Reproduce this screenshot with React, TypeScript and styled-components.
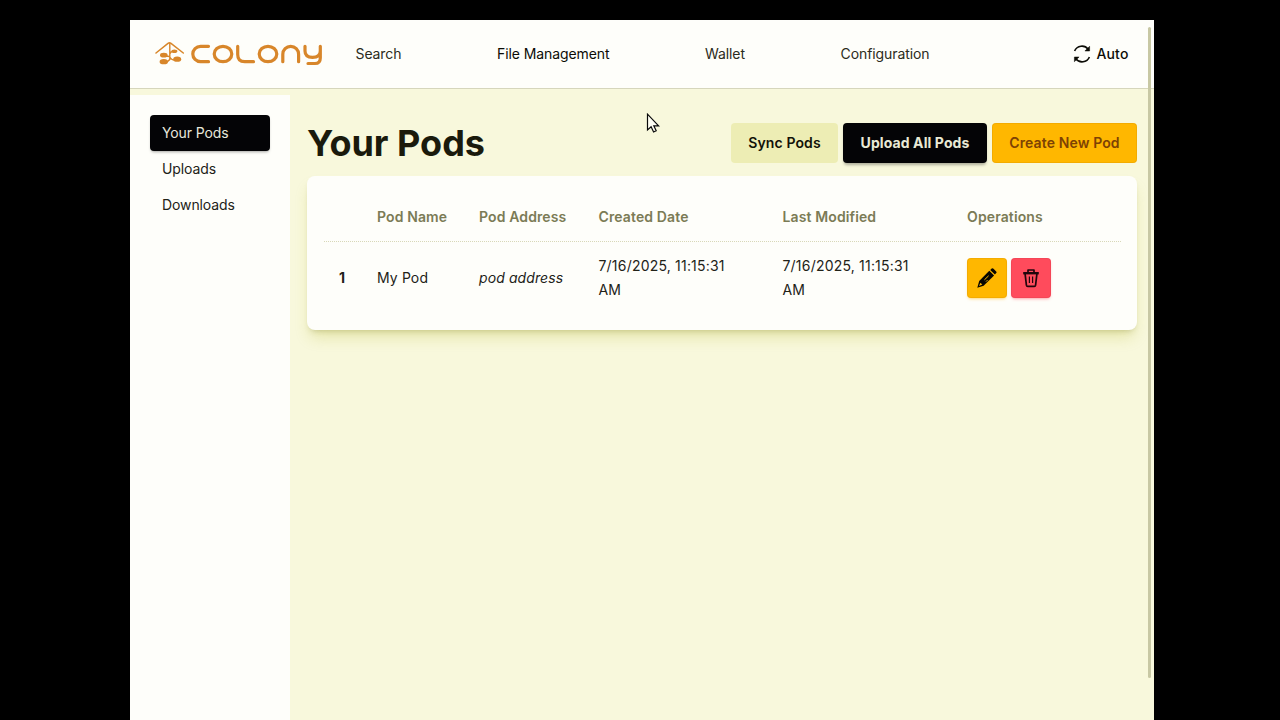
import React from "react";
import styled, { createGlobalStyle, css } from "styled-components";

const Global = createGlobalStyle`
  * { box-sizing: border-box; }
  body { margin: 0; background: #000; font-family: Inter, "Liberation Sans", sans-serif; font-size: 14px; line-height: 20px; color: #222218; }
  h1 { margin: 0; }
`;

const Desktop = styled.div`
  height: 720px;
  padding: 20px 126px 0 130px;
  overflow: hidden;
  position: relative;
  background: #000;
`;
const Window = styled.div`
  height: 700px;
  display: flex;
  flex-direction: column;
  background: #f8f8dc;
  position: relative;
`;
const Header = styled.header`
  height: 69px;
  flex: none;
  display: flex;
  align-items: center;
  padding: 0 25.5px 0 24.5px;
  background: #fefefa;
  border-bottom: 1px solid #d6d6bc;
`;
const Nav = styled.nav`
  display: flex;
  gap: 95.7px;
  margin-left: 33px;
  flex: 1;
  letter-spacing: -0.1px;
`;
const NavItem = styled.span<{ $active?: boolean }>`
  color: ${(p) => (p.$active ? "#0c0c06" : "#2b2b20")};
`;
const Theme = styled.div`
  display: flex;
  align-items: center;
  gap: 5px;
  font-weight: 500;
  letter-spacing: 0.15px;
  color: #0c0c06;
`;
const Body = styled.div`
  display: flex;
  flex: 1;
`;
const Sidebar = styled.aside`
  width: 160px;
  margin-top: 6px;
  padding: 20px;
  background: #fefefa;
  letter-spacing: -0.1px;
`;
const MenuItem = styled.div<{ $active?: boolean }>`
  height: 36px;
  padding: 8px 12px;
  border-radius: 4px;
  ${(p) =>
    p.$active &&
    css`
      background: #040406;
      color: #e8e8dc;
      box-shadow: 0 2px 3px -1px rgba(0, 0, 0, 0.35);
    `}
`;
const Main = styled.main`
  flex: 1;
  padding: 34px 17px 0 17px;
`;
const TitleRow = styled.div`
  display: flex;
  align-items: center;
  gap: 5px;
  height: 40px;
`;
const Title = styled.h1`
  flex: 1;
  font-size: 36px;
  line-height: 40px;
  font-weight: 700;
  color: #1a1a0c;
`;
const tones = {
  plain: css`background: #ededb4; color: #121208; letter-spacing: 0.12px;`,
  dark: css`background: #040406; color: #e9e9d5; font-weight: 700; letter-spacing: 0.1px; box-shadow: 0 3px 3px -1px rgba(0, 0, 0, 0.3);`,
  amber: css`background: #ffb700; color: #7d4204; letter-spacing: 0.12px; box-shadow: inset 0 0 0 1px rgba(200, 130, 0, 0.22);`,
};
const Button = styled.button<{ $tone: keyof typeof tones; $width: number }>`
  width: ${(p) => p.$width}px;
  height: 40px;
  padding: 0;
  border: 0;
  border-radius: 4px;
  font: 600 14px/20px Inter, "Liberation Sans", sans-serif;
  white-space: nowrap;
  ${(p) => tones[p.$tone]}
`;
const Card = styled.section`
  margin-top: 13px;
  height: 154px;
  padding: 16px 16px 16px 17px;
  border-radius: 8px;
  background: #fefefa;
  box-shadow: 0 10px 15px -3px rgba(170, 170, 0, 0.24), 0 4px 6px -4px rgba(90, 90, 30, 0.35);
`;
const Row = styled.div<{ $head?: boolean }>`
  display: grid;
  grid-template-columns: 38px 102px 119.5px 184px 184.5px 1fr;
  align-items: center;
  padding-left: 15px;
  height: ${(p) => (p.$head ? 50 : 72)}px;
  line-height: 24px;
  ${(p) =>
    p.$head &&
    css`
      border-bottom: 1px dotted #d8d8b8;
      font-weight: 600;
      letter-spacing: 0.12px;
      color: #7b7b55;
    `}
`;
const Index = styled.b`
  font-weight: 700;
`;
const Name = styled.span`
  letter-spacing: 0.12px;
`;
const Address = styled.em`
  letter-spacing: 0.1px;
`;
const Stamp = styled.span`
  width: 152px;
  padding-right: 20px;
  letter-spacing: 0.2px;
`;
const Actions = styled.div`
  display: flex;
  gap: 4px;
`;
const IconButton = styled.button<{ $danger?: boolean }>`
  width: 40px;
  height: 40px;
  padding: 0;
  border: 0;
  border-radius: 4px;
  display: grid;
  place-items: center;
  background: ${(p) => (p.$danger ? "#ff4b5c" : "#ffb700")};
  box-shadow: inset 0 0 0 1px ${(p) => (p.$danger ? "rgba(200,50,70,.2)" : "rgba(200,130,0,.2)")},
    0 2px 3px -1px ${(p) => (p.$danger ? "rgba(255,75,92,.5)" : "rgba(255,183,0,.5)")};
`;
const Scrollbar = styled.div`
  position: absolute;
  right: 3px;
  top: 7px;
  width: 3px;
  height: 651px;
  border-radius: 2px;
  background: #c8c8a4;
`;
const Cursor = styled.svg`
  position: absolute;
  left: 646px;
  top: 113px;
`;

const Logo = () => (
  <svg width="168" height="30" viewBox="0 -1 168 30" fill="none" stroke="#d8862a" role="img" aria-label="Colony">
    <path d="M1 13L13 3.3Q14.5 2.2 16 3.3L28.3 13" strokeWidth="1.5" strokeLinecap="round" />
    <path d="M14.8 3V20M14.8 19.5Q13 22 10 22M14.8 16.5Q12 16 10 16M14.8 14Q16 11 18 11.5M14.8 17Q16 20 20 20" strokeWidth="1.4" />
    <g fill="#d8862a" stroke="none">
      <ellipse cx="8.8" cy="15.2" rx="3.8" ry="2.4" />
      <ellipse cx="8.8" cy="21.7" rx="4.2" ry="2.6" />
      <ellipse cx="19.4" cy="11.2" rx="3" ry="1.8" />
      <ellipse cx="22.2" cy="19.2" rx="4" ry="2.6" />
    </g>
    <g strokeWidth="3.2" strokeLinecap="round" strokeLinejoin="round">
      <path d="M53.5 6.3H45.5A7.7 7.7 0 0 0 45.5 21.7H53.5" />
      <ellipse cx="68" cy="14" rx="8.8" ry="7.7" />
      <path d="M82.7 6.3V14.5Q82.7 21.7 89.7 21.7H98.5" />
      <ellipse cx="113" cy="14" rx="8.8" ry="7.7" />
      <path d="M127.8 21.7V14.2A7.9 7.9 0 0 1 143.6 14.2V21.7" />
      <path d="M150 6.3V11Q150 17.3 157.5 17.3Q165.3 17.3 165.3 11V6.3V18Q165.3 23.5 160 23.5H153" />
    </g>
  </svg>
);

const RefreshIcon = () => (
  <svg width="18" height="20" viewBox="0 0 18 20" fill="none" stroke="#0c0c06" strokeWidth="1.6">
    <path d="M1.6 7A7.9 7.9 0 0 1 15.2 5.3M16.4 13A7.9 7.9 0 0 1 2.8 14.7" />
    <path d="M16.6 2.3V7H11.9ZM1.4 17.7V13H6.1Z" fill="#0c0c06" strokeWidth=".5" />
  </svg>
);

const PencilIcon = () => (
  <svg width="20" height="20" viewBox="0 0 20 20">
    <path d="M13.2 1.9L14.7 .6Q15.6 -.1 16.5 .7L19.2 3.4Q20 4.2 19.2 5.1L17.9 6.6Z" fill="#080600" />
    <path d="M12.3 2.8L17.1 7.6L6.6 17.8L.3 19.8L2.2 13Z" fill="#080600" />
    <path d="M3.4 14.8L5.3 16.6L2 17.9Z" fill="#ffb700" />
    <path d="M7.4 11.9L11.6 7.8M9 13.6L10.5 12.1" stroke="#ffb700" strokeWidth="1" />
  </svg>
);

const TrashIcon = () => (
  <svg width="18" height="20" viewBox="0 0 18 20" fill="none" stroke="#22060c" strokeWidth="1.7" strokeLinejoin="round">
    <path d="M1.2 5.2H16.8" strokeWidth="2.4" />
    <path d="M6 4.2V2H12V4.2M3.1 5.8L4.4 17.2Q4.6 18.4 5.7 18.4H12.3Q13.4 18.4 13.6 17.2L14.9 5.8" />
    <path d="M7.4 8.6V15M10.6 8.6V15" strokeWidth="1.2" />
  </svg>
);

const navItems = ["Search", "File Management", "Wallet", "Configuration"];
const menuItems = ["Your Pods", "Uploads", "Downloads"];
const columns = ["", "Pod Name", "Pod Address", "Created Date", "Last Modified", "Operations"];

export default function App() {
  return (
    <Desktop>
      <Global />
      <Window>
        <Header>
          <Logo />
          <Nav>
            {navItems.map((n) => (
              <NavItem key={n} $active={n === "File Management"}>{n}</NavItem>
            ))}
          </Nav>
          <Theme><RefreshIcon />Auto</Theme>
        </Header>
        <Body>
          <Sidebar>
            {menuItems.map((m, i) => (
              <MenuItem key={m} $active={i === 0}>{m}</MenuItem>
            ))}
          </Sidebar>
          <Main>
            <TitleRow>
              <Title>Your Pods</Title>
              <Button $tone="plain" $width={107}>Sync Pods</Button>
              <Button $tone="dark" $width={144}>Upload All Pods</Button>
              <Button $tone="amber" $width={145}>Create New Pod</Button>
            </TitleRow>
            <Card>
              <Row $head>
                {columns.map((c) => <span key={c}>{c}</span>)}
              </Row>
              <Row>
                <Index>1</Index>
                <Name>My Pod</Name>
                <Address>pod address</Address>
                <Stamp>7/16/2025, 11:15:31 AM</Stamp>
                <Stamp>7/16/2025, 11:15:31 AM</Stamp>
                <Actions>
                  <IconButton aria-label="Edit pod"><PencilIcon /></IconButton>
                  <IconButton $danger aria-label="Delete pod"><TrashIcon /></IconButton>
                </Actions>
              </Row>
            </Card>
          </Main>
        </Body>
        <Scrollbar />
      </Window>
      <Cursor width="14" height="21" viewBox="0 0 14 21">
        <path d="M1.5 1.2V17L5.1 13.8L7.6 19L10.2 17.8L7.8 12.8H12.6Z" fill="#fffff4" stroke="#0a0a0a" strokeWidth="1.2" />
      </Cursor>
    </Desktop>
  );
}
